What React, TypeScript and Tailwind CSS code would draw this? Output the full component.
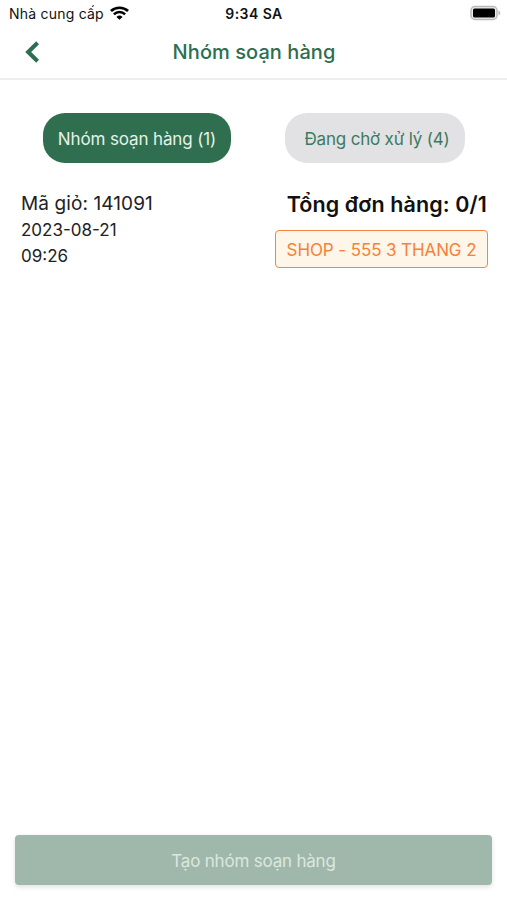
function StatusBar() {
  return (
    <div className="grid h-7 grid-cols-3 items-center pl-[9px] pr-[6px] pb-[2px] text-[#111]">
      <div className="flex items-center gap-[6px]">
        <span className="whitespace-nowrap text-[14px] tracking-[0.22px]">Nhà cung cấp</span>
        <svg width="19" height="14" viewBox="0 0 18 14" preserveAspectRatio="none" fill="none" stroke="#000" className="mb-px shrink-0">
          <path d="M0.9 5a11.6 11.6 0 0 1 16.2 0" strokeWidth="2.6" />
          <path d="M3.7 8.3a7.4 7.4 0 0 1 10.6 0" strokeWidth="2.4" />
          <path d="M6.1 10.9a4.2 4.2 0 0 1 5.8 0L9 13.8z" fill="#000" stroke="none" />
        </svg>
      </div>
      <span className="whitespace-nowrap pr-[2px] text-center text-[14px] font-semibold tracking-[0.45px]">9:34 SA</span>
      <svg width="31" height="16" viewBox="0 0 31 16" className="justify-self-end">
        <rect x="1" y="1.5" width="26" height="13" rx="4" fill="#eee" stroke="#b9b9b9" strokeWidth="1.5" />
        <rect x="3" y="3.5" width="22" height="9" rx="1.5" fill="#000" />
        <path d="M28.5 5.5a2.6 2.6 0 0 1 0 5z" fill="#b9b9b9" />
      </svg>
    </div>
  );
}

function Header() {
  return (
    <header className="grid h-[52px] grid-cols-[64px_1fr_64px] items-center border-b-2 border-[#eeeeef] text-[#2e6e50]">
      <button className="pl-[25px] pb-[2px]" aria-label="Quay lại">
        <svg width="15" height="22" viewBox="0 0 15 22" fill="none" stroke="currentColor" strokeWidth="4.1">
          <path d="M12.6 1.8 3.2 11l9.4 9.2" />
        </svg>
      </button>
      <h1 className="pb-[3px] pl-px text-center text-[20px] font-medium leading-6 tracking-[0.06px]">Nhóm soạn hàng</h1>
    </header>
  );
}

export default function App() {
  return (
    <div className="flex h-[900px] w-[507px] flex-col bg-white font-['Inter','Noto_Sans',sans-serif]">
      <StatusBar />
      <Header />
      <nav className="mt-[33px] flex justify-between pl-[43px] pr-[42px]">
        <button className="h-[50px] w-[188px] whitespace-nowrap rounded-[22px] bg-[#2f6f50] pt-[3px] text-[17px] tracking-[-0.13px] text-[#e6f1e9]">
          Nhóm soạn hàng (1)
        </button>
        <button className="h-[50px] w-[180px] whitespace-nowrap rounded-[22px] bg-[#e2e2e4] pl-1 pt-[3px] text-[17px] tracking-[-0.18px] text-[#3d7a60]">
          Đang chờ xử lý (4)
        </button>
      </nav>
      <main className="mt-[26px] flex flex-1 items-start justify-between pl-[21px] pr-[20px]">
        <div className="text-[17px] leading-[26px] text-[#222]">
          <p className="pt-px text-[19px] leading-7 tracking-[0.1px]">Mã giỏ: 141091</p>
          <p className="-mt-px">2023-08-21</p>
          <p>09:26</p>
        </div>
        <div className="flex flex-col items-end">
          <p className="whitespace-nowrap text-[21.5px] font-semibold leading-[30px] tracking-[0.1px] text-[#111]">Tổng đơn hàng: 0/1</p>
          <span className="-mr-px mt-[11px] flex h-[38px] w-[213px] items-center justify-center whitespace-nowrap rounded-[4px] border-[1.5px] border-[#f2854a] bg-[#fff6ea] pt-[3px] text-[17px] tracking-[-0.1px] text-[#f58238]">
            SHOP - 555 3 THANG 2
          </span>
        </div>
      </main>
      <footer className="pb-[15px] pl-[15px] pr-[15px]">
        <button className="h-[50px] w-full rounded-[4px] bg-[#a0b8ab] pt-[3px] text-[17px] tracking-[-0.2px] text-[#dbe8df] shadow-[0_2px_5px_rgba(0,0,0,0.12)]">
          Tạo nhóm soạn hàng
        </button>
      </footer>
    </div>
  );
}
